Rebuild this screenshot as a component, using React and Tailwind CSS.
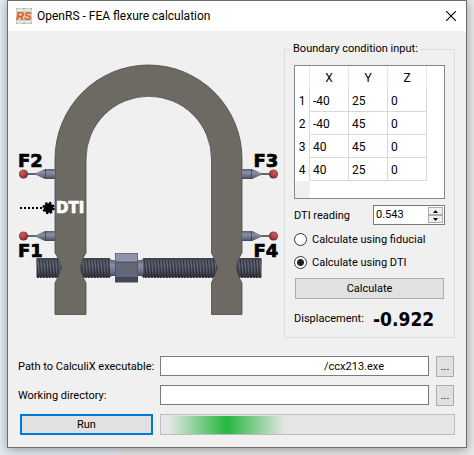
import React from "react";

const rows = [
  ["-40", "25", "0"],
  ["-40", "45", "0"],
  ["40", "45", "0"],
  ["40", "25", "0"],
];

function AppIcon() {
  return (
    <svg viewBox="0 0 16 16" className="h-4 w-4" aria-hidden="true">
      <rect width="16" height="16" fill="#ccd4d3" />
      <path d="M1 1h14v2H1zM1 13h14v2H1z" fill="#e2e7e6" />
      <path d="M0 0h2l-2 2zM16 0h-2l2 2zM0 16v-2l2 2zM16 16v-2l-2 2zM6 0h4l-2 2zM6 16h4l-2-2z" fill="#a9b5b3" />
      <text x="8" y="12" textAnchor="middle" fontSize="11" fontWeight="900" fontStyle="italic" fill="#e0640c" stroke="#e0640c" strokeWidth="0.2" fontFamily="Liberation Sans, sans-serif">RS</text>
    </svg>
  );
}

function Pin() {
  return (
    <g>
      <rect x="27" y="-1" width="11" height="2" fill="#626778" />
      <path d="M36 -1L45 -5V5L36 1z" fill="url(#metal)" />
      <rect x="45" y="-5" width="10" height="10" fill="url(#metal)" />
      <path d="M45.500 -5V5" stroke="#3e4254" strokeWidth="0.8" />
      <circle cx="23.500" cy="0" r="4.600" fill="url(#ball)" />
    </g>
  );
}

function Diagram() {
  return (
    <svg viewBox="18 60 266 260" className="h-[260px] w-full" role="img" aria-label="Flexure with forces F1 to F4 and DTI">
      <defs>
        <linearGradient id="metal" x1="0" y1="0" x2="0" y2="1">
          <stop offset="0" stopColor="#5c6072" />
          <stop offset="0.35" stopColor="#8b8fa2" />
          <stop offset="0.7" stopColor="#6c7082" />
          <stop offset="1" stopColor="#414558" />
        </linearGradient>
        <radialGradient id="ball" cx="0.4" cy="0.35" r="0.65">
          <stop offset="0" stopColor="#c75c5a" />
          <stop offset="0.6" stopColor="#a94141" />
          <stop offset="1" stopColor="#6d2527" />
        </radialGradient>
        <linearGradient id="rod" x1="0" y1="0" x2="0" y2="1">
          <stop offset="0" stopColor="#4a4e5a" />
          <stop offset="0.35" stopColor="#565a67" />
          <stop offset="1" stopColor="#30333d" />
        </linearGradient>
        <pattern id="thread" width="3" height="19" patternUnits="userSpaceOnUse" y="258">
          <path d="M0.300 0L2 19" stroke="#2a2d37" strokeWidth="0.900" />
          <path d="M1.600 2L3 16" stroke="#787c8b" strokeWidth="0.400" />
        </pattern>
      </defs>
      <rect x="36.500" y="259" width="225" height="18" fill="url(#rod)" />
      <rect x="36.500" y="258" width="225" height="19.500" fill="url(#thread)" />
      <path d="M37 258.500H261M37 277.500H261" stroke="#353843" strokeDasharray="2 1" />
      <rect x="110" y="257" width="33" height="22" fill="#f0f0f0" />
      <path d="M110 259L112 260H141L143 259V277L141 276H112L110 277z" fill="url(#metal)" />
      <path d="M115 253H138V282.500H115z" fill="#424656" />
      <path d="M115.500 253.500H137.500V262H115.500z" fill="#9094aa" />
      <rect x="115.500" y="262" width="22" height="15.500" fill="#636779" />
      <path d="M115.500 262H137.500M115.500 277.500H137.500" stroke="#353948" strokeWidth="0.700" />
      <path
        d="M55 314.500V283L58 277L61.500 268L58 258L55 253V159A93.500 94 0 0 1 242 159V253L239 258L236 268L239 277L242 283V314.500H211.500V283L214 277L217.500 268L214 258L211.500 253V159A62.700 62.700 0 0 0 86 159V253L83 258L80 268L83 277L86 283V314.500z"
        fill="#6d6a64"
        stroke="#4b4946"
        strokeWidth="0.800"
      />
      <g transform="translate(0 174)"><Pin /></g>
      <g transform="translate(0 236)"><Pin /></g>
      <g transform="translate(297 174) scale(-1 1)"><Pin /></g>
      <g transform="translate(297 236) scale(-1 1)"><Pin /></g>
      <path d="M20 208H43" stroke="#000" strokeWidth="2" strokeDasharray="2 2" />
      <circle cx="48.500" cy="208" r="4.800" />
      <circle cx="48.500" cy="208" r="5" fill="none" stroke="#000" strokeWidth="2.400" strokeDasharray="2.200 1.727" />
      <g fontFamily="DejaVu Sans, sans-serif" fontWeight="700" fontSize="18" fill="#000" stroke="#000" strokeWidth="0.700">
        <text x="18" y="167">F2</text>
        <text x="18" y="256.500">F1</text>
        <text x="253.500" y="167">F3</text>
        <text x="253.500" y="256.500">F4</text>
        <text x="56" y="213" fontSize="15" fill="#fff" stroke="#fff">DTI</text>
      </g>
    </svg>
  );
}

function ResultsTable() {
  return (
    <div className="flex h-[134px] flex-col border border-[#828790] bg-white">
      <table className="w-[132px] table-fixed border-separate border-spacing-0 text-left text-[12px] leading-4">
        <thead>
          <tr className="h-[23px]">
            <th className="w-[15px] border-r border-[#e5e5e5] p-0"></th>
            {["X", "Y", "Z"].map((h) => (
              <th key={h} scope="col" className="w-[39px] border-r border-[#e5e5e5] p-0 pt-px text-center font-normal">{h}</th>
            ))}
          </tr>
        </thead>
        <tbody>
          {rows.map((r, i) => (
            <tr key={i} className="h-[23px]">
              <th scope="row" className="border-r border-b border-r-[#d8d8d8] border-b-white p-0 pt-[2px] text-center font-normal">{i + 1}</th>
              {r.map((v, j) => (
                <td key={j} className="border-r border-b border-[#d8d8d8] p-0 pt-[2px] pl-[3px]">{v}</td>
              ))}
            </tr>
          ))}
        </tbody>
      </table>
      <div className="w-[15px] flex-1 bg-[#f0f0f0]" />
    </div>
  );
}

function Radio({ label, checked }) {
  return (
    <label className="flex h-[23px] items-center gap-[5px]">
      <input
        type="radio"
        name="method"
        defaultChecked={checked}
        className="h-[13px] w-[13px] appearance-none rounded-full border border-[#333] bg-white checked:bg-[radial-gradient(circle,#222_0_3px,#fff_4px)]"
      />
      <span className="pt-px">{label}</span>
    </label>
  );
}

function PathRow({ id, label, value }) {
  return (
    <div className="flex items-start">
      <label htmlFor={id} className="w-[142px] shrink-0 whitespace-nowrap leading-[22px]">{label}</label>
      <input id={id} defaultValue={value} className="h-5 min-w-0 flex-1 border border-[#7a7a7a] bg-white pr-11 text-right outline-none" />
      <button aria-label="Browse" className="ml-[7px] mr-px h-[21px] w-[18px] border border-[#adadad] bg-[#e1e1e1] leading-4">...</button>
    </div>
  );
}

export default function App() {
  return (
    <div className="min-h-screen bg-[linear-gradient(90deg,#e3ebf4_0_116px,#e9e9e9_116px)] px-[7px] pb-[7px] font-['Roboto','Open_Sans',sans-serif] text-[11px] text-black">
      <div className="border border-[#6b6e70] bg-[#f0f0f0] shadow-[0_2px_10px_rgba(0,0,0,0.35)]">
        <header className="flex h-[30px] items-center bg-white pr-[10px] pl-2">
          <AppIcon />
          <h1 className="ml-[5px] flex-1 text-[12px]">OpenRS - FEA flexure calculation</h1>
          <button aria-label="Close" className="p-0">
            <svg viewBox="0 0 10 10" className="h-[10px] w-[10px]"><path d="M0 0L10 10M10 0L0 10" stroke="#000" strokeWidth="1.100" /></svg>
          </button>
        </header>
        <main className="pt-[9px] pr-[11px] pb-3 pl-[10px]">
          <div className="flex">
            <div className="min-w-0 flex-1 pt-5"><Diagram /></div>
            <fieldset className="w-[171px] border border-[#dcdcdc] px-[9px] pb-1">
              <legend className="-ml-1 px-[3px] leading-[18px]">Boundary condition input:</legend>
              <div className="pt-[7px]"><ResultsTable /></div>
              <div className="mt-[6px] flex items-center justify-between">
                <label htmlFor="dti" className="pt-[2px] whitespace-nowrap">DTI reading</label>
                <div className="flex h-5 w-[72px] border border-[#7a7a7a] bg-white pr-px">
                  <input id="dti" defaultValue="0.543" className="min-w-0 flex-1 pt-px pl-[2px] outline-none" />
                  <div className="flex w-[15px] flex-col py-px">
                    <button aria-label="Increase" className="flex h-2 items-center justify-center border border-[#adadad] bg-[#f0f0f0]">
                      <svg viewBox="0 0 5 3" className="h-[3px] w-[5px]"><path d="M0 3L2.500 0L5 3z" /></svg>
                    </button>
                    <button aria-label="Decrease" className="flex h-2 items-center justify-center border border-[#adadad] bg-[#f0f0f0]">
                      <svg viewBox="0 0 5 3" className="h-[3px] w-[5px]"><path d="M0 0L2.500 3L5 0z" /></svg>
                    </button>
                  </div>
                </div>
              </div>
              <div className="pt-[3px]">
                <Radio label="Calculate using fiducial" />
                <Radio label="Calculate using DTI" checked />
              </div>
              <button className="mx-px mt-1 block h-[21px] w-[149px] border border-[#adadad] bg-[#e1e1e1] pt-px leading-4">Calculate</button>
              <div className="mt-[6px] flex h-7 items-center">
                <span className="w-[79px]">Displacement:</span>
                <output className="font-['DejaVu_Sans_Condensed','DejaVu_Sans',sans-serif] text-[19px] font-bold">-0.922</output>
              </div>
            </fieldset>
          </div>
          <div className="mt-[18px] flex flex-col gap-[7px]">
            <PathRow id="exe" label="Path to CalculiX executable:" value="/ccx213.exe" />
            <PathRow id="dir" label="Working directory:" value="" />
            <div className="flex gap-[7px] pl-[2px]">
              <button className="h-[21px] w-[133px] border-2 border-[#0078d7] bg-[#e1e1e1] pt-px leading-4">Run</button>
              <div role="progressbar" aria-label="Calculation progress" className="h-[21px] flex-1 border border-[#bcbcbc] bg-[#e6e6e6] pt-px">
                <div className="ml-[7px] h-full w-[118px] bg-[linear-gradient(90deg,#e6e6e6,#25b83f_50%,#e6e6e6)]" />
              </div>
            </div>
          </div>
        </main>
      </div>
    </div>
  );
}
